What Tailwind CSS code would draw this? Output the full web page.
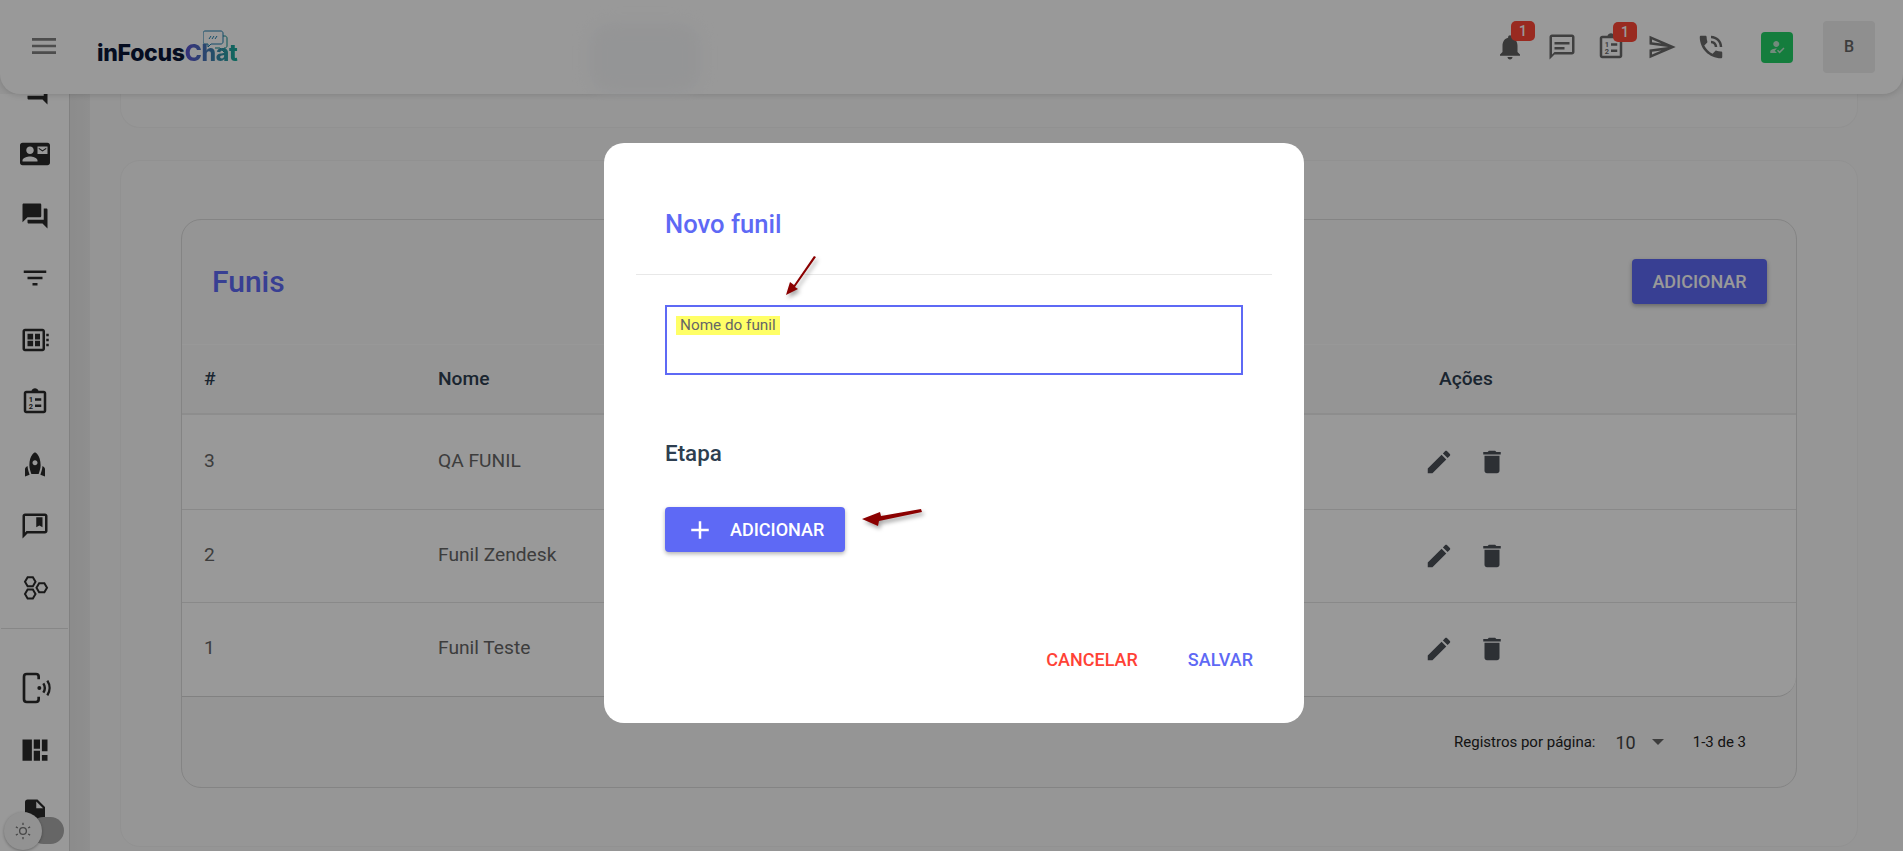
<!DOCTYPE html>
<html lang="pt-BR">
<head>
<meta charset="UTF-8">
<title>Funis</title>
<script src="https://cdn.jsdelivr.net/npm/@tailwindcss/browser@4"></script>
</head>
<body class="h-screen overflow-hidden flex flex-col bg-[#f7f7f7] font-[Roboto,sans-serif] text-[#333]">

<!-- topo -->
<header class="relative z-10 h-[94px] shrink-0 flex items-center bg-white rounded-b-[20px] shadow-[0_1px_6px_rgba(0,0,0,0.15)]">
  <div class="absolute left-[590px] top-[24px] w-[110px] h-[68px] rounded-[20px] bg-[#f7f8fa] blur-[8px]"></div>
  <svg class="w-[32px] h-[32px] ml-[28px] -mt-[2px] fill-[#808080]" viewBox="0 0 24 24"><path d="M3 18h18v-2H3v2zm0-5h18v-2H3v2zm0-7v2h18V6H3z"/></svg>
  <div class="relative ml-[37px] mt-[12px] w-[150px] h-[40px]">
    <svg class="absolute left-[106px] -top-[3px] w-[28px] h-[24px] fill-none" viewBox="0 0 28 24">
      <path d="M10 6h12c1 0 2 1 2 2v8c0 1-1 2-2 2h-1v4l-4-4H12" stroke="#0f8f8f" stroke-width="1"/>
      <path d="M2 1h16c1 0 2 1 2 2v9c0 1-1 2-2 2H8l-3 3v-3H2c-1 0-2-1-2-2V3c0-1 1-2 2-2z" fill="#fff" stroke="#1f7fb0" stroke-width="1"/>
      <path d="M6 9l2-3M9 9l2-3M12 9l2-3" stroke="#1f7fb0" stroke-width="1"/>
    </svg>
    <span class="absolute left-0 top-[6px] whitespace-nowrap font-[Inter,sans-serif] font-extrabold text-[23px] tracking-[-0.3px] leading-[28px] text-[#0a1738]">inFocus<span class="bg-gradient-to-r from-[#5b4fd0] via-[#3f7fb0] to-[#0fb09a] bg-clip-text text-transparent">Chat</span></span>
  </div>
  <div class="relative ml-auto flex items-center">
    <div class="relative w-[30px] h-[30px]">
      <svg class="w-[30px] h-[30px] fill-[#5f5f5f]" viewBox="0 0 24 24"><path d="M12 22c1.1 0 2-.9 2-2h-4c0 1.1.89 2 2 2zm6-6v-5c0-3.07-1.64-5.64-4.5-6.32V4c0-.83-.67-1.5-1.5-1.5s-1.5.67-1.5 1.5v.68C7.63 5.36 6 7.92 6 11v5l-2 2v1h16v-1l-2-2z"/></svg>
      <span class="absolute left-[16px] -top-[11px] w-[24px] h-[20px] rounded-[5px] bg-[#ff4636] text-white text-[14px] font-medium leading-[20px] text-center">1</span>
    </div>
    <svg class="ml-[21.5px] w-[30px] h-[30px] fill-[#6a6a6a]" viewBox="0 0 24 24"><path d="M20 2H4c-1.1 0-2 .9-2 2v18l4-4h14c1.1 0 2-.9 2-2V4c0-1.1-.9-2-2-2zm0 14H6l-2 2V4h16v12z"/><path d="M6 12h8v2H6zm0-4h12v2H6z"/></svg>
    <div class="relative ml-[19.5px] w-[30px] h-[30px]">
      <svg class="w-[30px] h-[30px] fill-[#6a6a6a]" viewBox="0 0 24 24"><path d="M19 3h-4.18C14.4 1.84 13.3 1 12 1s-2.4.84-2.82 2H5c-1.1 0-2 .9-2 2v14c0 1.1.9 2 2 2h14c1.1 0 2-.9 2-2V5c0-1.1-.9-2-2-2zm0 16H5V5h14z"/><path d="M12 9h5v2h-5zm0 5h5v2h-5z"/><text x="7" y="12" font-size="6" font-weight="700" font-family="Roboto">1</text><text x="7" y="17.5" font-size="6" font-weight="700" font-family="Roboto">2</text></svg>
      <span class="absolute left-[17px] -top-[10px] w-[24px] h-[20px] rounded-[5px] bg-[#ff4636] text-white text-[14px] font-medium leading-[20px] text-center">1</span>
    </div>
    <svg class="ml-[21px] w-[30px] h-[30px] fill-[#6a6a6a]" viewBox="0 0 24 24"><path d="M4.01 6.03l7.51 3.22-7.52-1 .01-2.22m7.5 8.72L4 17.97v-2.22l7.51-1M2.01 3L2 10l15 2-15 2 .01 7L23 12 2.01 3z"/></svg>
    <svg class="ml-[19px] w-[30px] h-[30px] fill-[#6a6a6a]" viewBox="0 0 24 24"><path d="M15 12h2c0-2.76-2.24-5-5-5v2c1.66 0 3 1.34 3 3zm4 0h2c0-4.97-4.03-9-9-9v2c3.87 0 7 3.13 7 7zm1 3.5c-1.25 0-2.45-.2-3.57-.57-.1-.03-.21-.05-.31-.05-.26 0-.51.1-.71.29l-2.2 2.2c-2.83-1.44-5.15-3.75-6.59-6.59l2.2-2.21c.28-.26.36-.65.25-1C8.7 6.45 8.5 5.25 8.5 4c0-.55-.45-1-1-1H4c-.55 0-1 .45-1 1 0 9.39 7.61 17 17 17 .55 0 1-.45 1-1v-3.5c0-.55-.45-1-1-1z"/></svg>
    <div class="ml-[35px] w-[32px] h-[31px] rounded-[4px] bg-[#22d066] flex items-center justify-center">
      <svg class="w-[18px] h-[18px] fill-[#bfe8cf]" viewBox="0 0 24 24"><path d="M9 17l3-2.94c-.39-.04-.68-.06-1-.06-2.67 0-8 1.34-8 4v2h9l-3-3zm2-5c2.21 0 4-1.79 4-4s-1.79-4-4-4-4 1.79-4 4 1.79 4 4 4zM15.47 20.5L12 17l1.4-1.41 2.07 2.08 5.13-5.17 1.4 1.41z"/></svg>
    </div>
    <div class="ml-[30px] mr-[28px] w-[52px] h-[52px] rounded-[4px] bg-[#eeeeee] flex items-center justify-center text-[16px] font-medium text-[#666] -mt-[1px]">B</div>
  </div>
</header>

<div class="flex-1 min-h-0 flex overflow-hidden">
  <!-- menu lateral -->
  <aside class="w-[70px] shrink-0 -mt-[33px] bg-white border-r border-[#d8d8d8] flex flex-col">
    <div class="h-[62px] shrink-0 flex items-center justify-center"><svg class="w-[30px] h-[30px] fill-[#2b2b2b]" viewBox="0 0 24 24"><path d="M21 6h-2v9H6v2c0 .55.45 1 1 1h11l4 4V7c0-.55-.45-1-1-1z"/></svg></div>
    <div class="h-[62px] shrink-0 flex items-center justify-center"><svg class="w-[30px] h-[30px] fill-[#2b2b2b]" viewBox="0 0 24 24"><path d="M21 8V7l-3 2-3-2v1l3 2 3-2zm1-5H2C.9 3 0 3.9 0 5v14c0 1.1.9 2 2 2h20c1.1 0 1.99-.9 1.99-2L24 5c0-1.1-.9-2-2-2zM8 6c1.66 0 3 1.34 3 3s-1.34 3-3 3-3-1.34-3-3 1.34-3 3-3zm6 12H2v-1c0-2 4-3.1 6-3.1s6 1.1 6 3.1v1zm8-6h-8V6h8v6z"/></svg></div>
    <div class="h-[62px] shrink-0 flex items-center justify-center"><svg class="w-[30px] h-[30px] fill-[#2b2b2b]" viewBox="0 0 24 24"><path d="M21 6h-2v9H6v2c0 .55.45 1 1 1h11l4 4V7c0-.55-.45-1-1-1zm-4 6V3c0-.55-.45-1-1-1H3c-.55 0-1 .45-1 1v14l4-4h10c.55 0 1-.45 1-1z"/></svg></div>
    <div class="h-[62px] shrink-0 flex items-center justify-center"><svg class="w-[30px] h-[30px] fill-[#2b2b2b]" viewBox="0 0 24 24"><path d="M10 18h4v-2h-4v2zM3 6v2h18V6H3zm3 7h12v-2H6v2z"/></svg></div>
    <div class="h-[62px] shrink-0 flex items-center justify-center"><svg class="w-[30px] h-[30px] fill-[#2b2b2b]" viewBox="0 0 24 24"><path fill-rule="evenodd" d="M4 3h14c1.1 0 2 .9 2 2v14c0 1.1-.9 2-2 2H4c-1.1 0-2-.9-2-2V5c0-1.1.9-2 2-2zm0 2v14h14V5H4z"/><path d="M6 7h4.500v4.500H6zm6 0h4v4.500h-4zm-6 5.500h4.500V17H6zm6 0h4V17h-4zM21 7h2v2h-2zm0 4h2v2h-2zm0 4h2v2h-2z"/></svg></div>
    <div class="h-[62px] shrink-0 flex items-center justify-center"><svg class="w-[30px] h-[30px] fill-[#2b2b2b]" viewBox="0 0 24 24"><path d="M19 3h-4.180C14.400 1.840 13.300 1 12 1s-2.400.84-2.820 2H5c-1.100 0-2 .9-2 2v14c0 1.100.9 2 2 2h14c1.100 0 2-.9 2-2V5c0-1.100-.9-2-2-2zm0 16H5V5h14z"/><path d="M12 9h5v2h-5zm0 5h5v2h-5z"/><text x="7" y="12" font-size="6" font-weight="700" font-family="Roboto">1</text><text x="7" y="17.5" font-size="6" font-weight="700" font-family="Roboto">2</text></svg></div>
    <div class="h-[62px] shrink-0 flex items-center justify-center"><svg class="w-[30px] h-[30px] fill-[#2b2b2b]" viewBox="0 0 24 24"><path d="M12 2.500s4.500 2.040 4.500 10.500c0 2.490-1.040 5.570-1.600 7H9.100c-.56-1.430-1.600-4.510-1.600-7C7.500 4.540 12 2.500 12 2.500zm2 8.500c0-1.100-.9-2-2-2s-2 .9-2 2 .9 2 2 2 2-.9 2-2zm-6.310 9.520c-.48-1.230-1.520-4.170-1.670-6.870l-1.130.75c-.56.38-.89 1-.89 1.670V22l3.690-1.480zM20 22v-5.930c0-.67-.33-1.290-.89-1.660l-1.130-.75c-.15 2.690-1.200 5.640-1.670 6.870L20 22z"/></svg></div>
    <div class="h-[62px] shrink-0 flex items-center justify-center"><svg class="w-[30px] h-[30px] fill-[#2b2b2b]" viewBox="0 0 24 24"><path d="M20 2H4c-1.100 0-2 .9-2 2v18l4-4h14c1.100 0 2-.9 2-2V4c0-1.100-.9-2-2-2zm0 14H5.170L4 17.170V4h16v12z"/><path d="M13 5h5v8l-2.500-1.500L13 13z"/></svg></div>
    <div class="h-[62px] shrink-0 flex items-center justify-center"><svg class="w-[30px] h-[30px] fill-none stroke-[#2b2b2b] stroke-[1.600]" viewBox="0 0 24 24"><path d="M6.100 3.400h4.200l2.100 3.600-2.100 3.600H6.100L4 7z"/><path d="M15.300 8.200h4.200l2.100 3.600-2.100 3.600h-4.200l-2.100-3.600z"/><path d="M6.100 13.200h4.200l2.100 3.600-2.100 3.600H6.100L4 16.800z"/></svg></div>
    <div class="shrink-0 mt-[9px] border-t border-[#e2e2e2] mx-[1px]"></div>
    <div class="shrink-0 mt-[28px] h-[62px] flex items-center justify-center"><svg class="w-[32px] h-[32px] ml-[2px] fill-none stroke-[#2b2b2b]" viewBox="0 0 24 24"><path d="M14 5.500V3.500C14 2.400 13.100 1.500 12 1.500H5C3.900 1.500 3 2.400 3 3.500v17c0 1.100.9 2 2 2h7c1.100 0 2-.9 2-2v-2" stroke-width="2"/><circle cx="14.500" cy="12" r="1.500" fill="#2b2b2b" stroke="none"/><path d="M17.500 8.500c1.300 2 1.300 5 0 7M20.500 6.500c2.200 3.300 2.200 7.700 0 11" stroke-width="1.800"/></svg></div>
    <div class="h-[62px] shrink-0 flex items-center justify-center"><svg class="w-[30px] h-[30px] fill-[#2b2b2b]" viewBox="0 0 24 24"><path d="M2 3.500h7.500v17H2zM11 3.500h5v7.500h-5zM11 12.500h5v8h-5zM17.500 3.500H22V13h-4.500zM17.500 16H22v4.500h-4.500z"/></svg></div>
    <div class="h-[62px] shrink-0 flex items-center justify-center"><svg class="w-[30px] h-[30px] fill-[#2b2b2b]" viewBox="0 0 24 24"><path d="M6 2c-1.100 0-2 .9-2 2v16c0 1.100.9 2 2 2h12c1.100 0 2-.9 2-2V8l-6-6H6zm7 7V3.500L18.500 9H13z"/></svg></div>
  </aside>

  <!-- conteudo -->
  <main class="flex-1 min-w-0 overflow-hidden bg-[linear-gradient(90deg,#e9e9e9_0,#eeeeee_20px,#f8f8f8_20px)] pl-[50px] pr-[45px]">
    <div class="h-[34px] border border-t-0 border-[#f2f2f2] rounded-b-[20px] bg-[#fbfbfb]"></div>
    <section class="mt-[32px] h-[687px] border border-[#f2f2f2] rounded-[20px] bg-[#fbfbfb] pt-[58px] px-[60px]">
      <div class="h-[569px] border border-[#dcdcdc] rounded-[20px] bg-[#f8f8f8] flex flex-col">
        <div class="h-[125px] shrink-0 flex items-center justify-between border-b border-[#fdfdfd] pl-[30px] pr-[29px]">
          <h1 class="text-[30px] font-medium text-[#5e69f5] -mt-[2px]">Funis</h1>
          <button class="w-[135px] h-[45px] -mt-[1px] rounded-[4px] bg-[#5e69f5] text-white text-[18px] font-medium shadow-[0_2px_4px_rgba(0,0,0,0.3)]">ADICIONAR</button>
        </div>
        <div class="h-[70px] shrink-0 grid grid-cols-[234px_1001px_1fr] items-center border-b-2 border-[#ececec] pl-[22px] text-[19.2px] font-medium text-[#2d3e50]">
          <span>#</span><span>Nome</span><span>Ações</span>
        </div>
        <div class="h-[95px] shrink-0 grid grid-cols-[234px_986px_1fr] items-center border-b border-[#e4e4e4] pl-[22px] bg-white text-[19.2px] text-[#666]">
          <span class="-mt-[2px]">3</span><span class="-mt-[2px]">QA FUNIL</span>
          <div class="flex items-center gap-[23px]">
            <svg class="w-[30px] h-[30px] fill-[#4b5058]" viewBox="0 0 24 24"><path d="M3 17.250V21h3.750L17.810 9.940l-3.750-3.750L3 17.250zM20.710 7.040c.39-.39.39-1.020 0-1.410l-2.340-2.340c-.39-.39-1.020-.39-1.410 0l-1.830 1.830 3.750 3.750 1.830-1.830z"/></svg>
            <svg class="w-[30px] h-[30px] fill-[#4b5058]" viewBox="0 0 24 24"><path d="M6 19c0 1.100.9 2 2 2h8c1.100 0 2-.9 2-2V7H6v12zM19 4h-3.500l-1-1h-5l-1 1H5v2h14V4z"/></svg>
          </div>
        </div>
        <div class="h-[93px] shrink-0 grid grid-cols-[234px_986px_1fr] items-center border-b border-[#e4e4e4] pl-[22px] bg-white text-[19.2px] text-[#666]">
          <span class="-mt-[2px]">2</span><span class="-mt-[2px]">Funil Zendesk</span>
          <div class="flex items-center gap-[23px]">
            <svg class="w-[30px] h-[30px] fill-[#4b5058]" viewBox="0 0 24 24"><path d="M3 17.250V21h3.750L17.810 9.940l-3.750-3.750L3 17.250zM20.710 7.040c.39-.39.39-1.020 0-1.410l-2.340-2.340c-.39-.39-1.020-.39-1.410 0l-1.830 1.830 3.750 3.750 1.830-1.830z"/></svg>
            <svg class="w-[30px] h-[30px] fill-[#4b5058]" viewBox="0 0 24 24"><path d="M6 19c0 1.100.9 2 2 2h8c1.100 0 2-.9 2-2V7H6v12zM19 4h-3.500l-1-1h-5l-1 1H5v2h14V4z"/></svg>
          </div>
        </div>
        <div class="h-[94px] shrink-0 grid grid-cols-[234px_986px_1fr] items-center border-b border-[#d8d8d8] pl-[22px] bg-white rounded-br-[20px] text-[19.2px] text-[#666]">
          <span class="-mt-[2px]">1</span><span class="-mt-[2px]">Funil Teste</span>
          <div class="flex items-center gap-[23px] -mt-[1px]">
            <svg class="w-[30px] h-[30px] fill-[#4b5058]" viewBox="0 0 24 24"><path d="M3 17.250V21h3.750L17.810 9.940l-3.750-3.750L3 17.250zM20.710 7.040c.39-.39.39-1.020 0-1.410l-2.340-2.340c-.39-.39-1.020-.39-1.410 0l-1.830 1.830 3.750 3.750 1.830-1.830z"/></svg>
            <svg class="w-[30px] h-[30px] fill-[#4b5058]" viewBox="0 0 24 24"><path d="M6 19c0 1.100.9 2 2 2h8c1.100 0 2-.9 2-2V7H6v12zM19 4h-3.500l-1-1h-5l-1 1H5v2h14V4z"/></svg>
          </div>
        </div>
        <div class="flex-1 flex items-center justify-end pr-[50px] text-[15px] text-[#222]">
          <span>Registros por página:</span>
          <span class="ml-[20px] text-[18px] text-[#444]">10</span>
          <span class="ml-[16px] w-0 h-0 border-x-[6.5px] border-x-transparent border-t-[6.5px] border-t-[#666]"></span>
          <span class="ml-[29px]">1-3 de 3</span>
        </div>
      </div>
    </section>
  </main>
</div>

<!-- seletor de tema -->
<div class="absolute z-10 left-[30px] top-[817px] w-[34px] h-[27px] rounded-full bg-[#aaaaaa]"></div>
<div class="absolute z-10 left-[4px] top-[812px] w-[38px] h-[38px] rounded-full bg-[#f4f4f4] shadow-[0_1px_3px_rgba(0,0,0,0.3)] flex items-center justify-center">
  <svg class="w-[18px] h-[18px] fill-none stroke-[#777] stroke-[1.800]" viewBox="0 0 24 24"><circle cx="12" cy="12" r="4.500"/><path d="M12 1v3M12 20v3M2.500 6.500l2.600 1.500M18.900 16l2.600 1.500M2.500 17.500L5.100 16M18.900 8l2.600-1.500"/></svg>
</div>

<!-- modal -->
<div class="fixed inset-0 z-20 bg-black/40 flex justify-center items-start pt-[143px] pl-[5px]">
  <div class="relative w-[700px] h-[580px] rounded-[20px] bg-white">
    <h2 class="pl-[61px] pt-[67px] text-[25.6px] leading-[28px] font-medium text-[#5e69f5]">Novo funil</h2>
    <div class="mt-[36px] mx-[32px] border-t border-[#e8e8e8]"></div>
    <div class="mt-[30px] mx-[61px] h-[70px] border-2 border-[#5e69f5] pl-[9px] pt-[9px]">
      <span class="block w-fit h-[19px] px-[4px] bg-[#ffff66] text-[15.3px] leading-[19px] text-[#666]">Nome do funil</span>
    </div>
    <h3 class="mt-[64px] ml-[61px] text-[22.4px] leading-[28px] font-medium text-[#2d3e50]">Etapa</h3>
    <button class="mt-[40px] ml-[61px] w-[180px] h-[45px] rounded-[4px] bg-[#5e69f5] text-white text-[18px] font-medium shadow-[0_2px_4px_rgba(0,0,0,0.3)] flex items-center pl-[20px] gap-[15px]">
      <svg class="w-[30px] h-[30px] fill-white" viewBox="0 0 24 24"><path d="M19 13h-6v6h-2v-6H5v-2h6V5h2v6h6v2z"/></svg>
      ADICIONAR
    </button>
    <div class="mt-[94px] flex justify-end pr-[51px] gap-[50px] text-[18px] font-medium">
      <button class="text-[#ff4236]">CANCELAR</button>
      <button class="text-[#5e69f5]">SALVAR</button>
    </div>

    <!-- setas de anotacao -->
    <svg class="absolute left-0 top-0 w-[700px] h-[580px] pointer-events-none drop-shadow-[2px_3px_2px_rgba(0,0,0,0.35)]" viewBox="0 0 700 580">
      <path d="M210 113L190 142L186 139L182 152L194 146L191 144L212 114z" fill="#8b0000"/>
      <path d="M317 366L277 373L276 369L258 376L274 383L275 378L318 369z" fill="#8b0000"/>
    </svg>
  </div>
</div>
</body>
</html>
